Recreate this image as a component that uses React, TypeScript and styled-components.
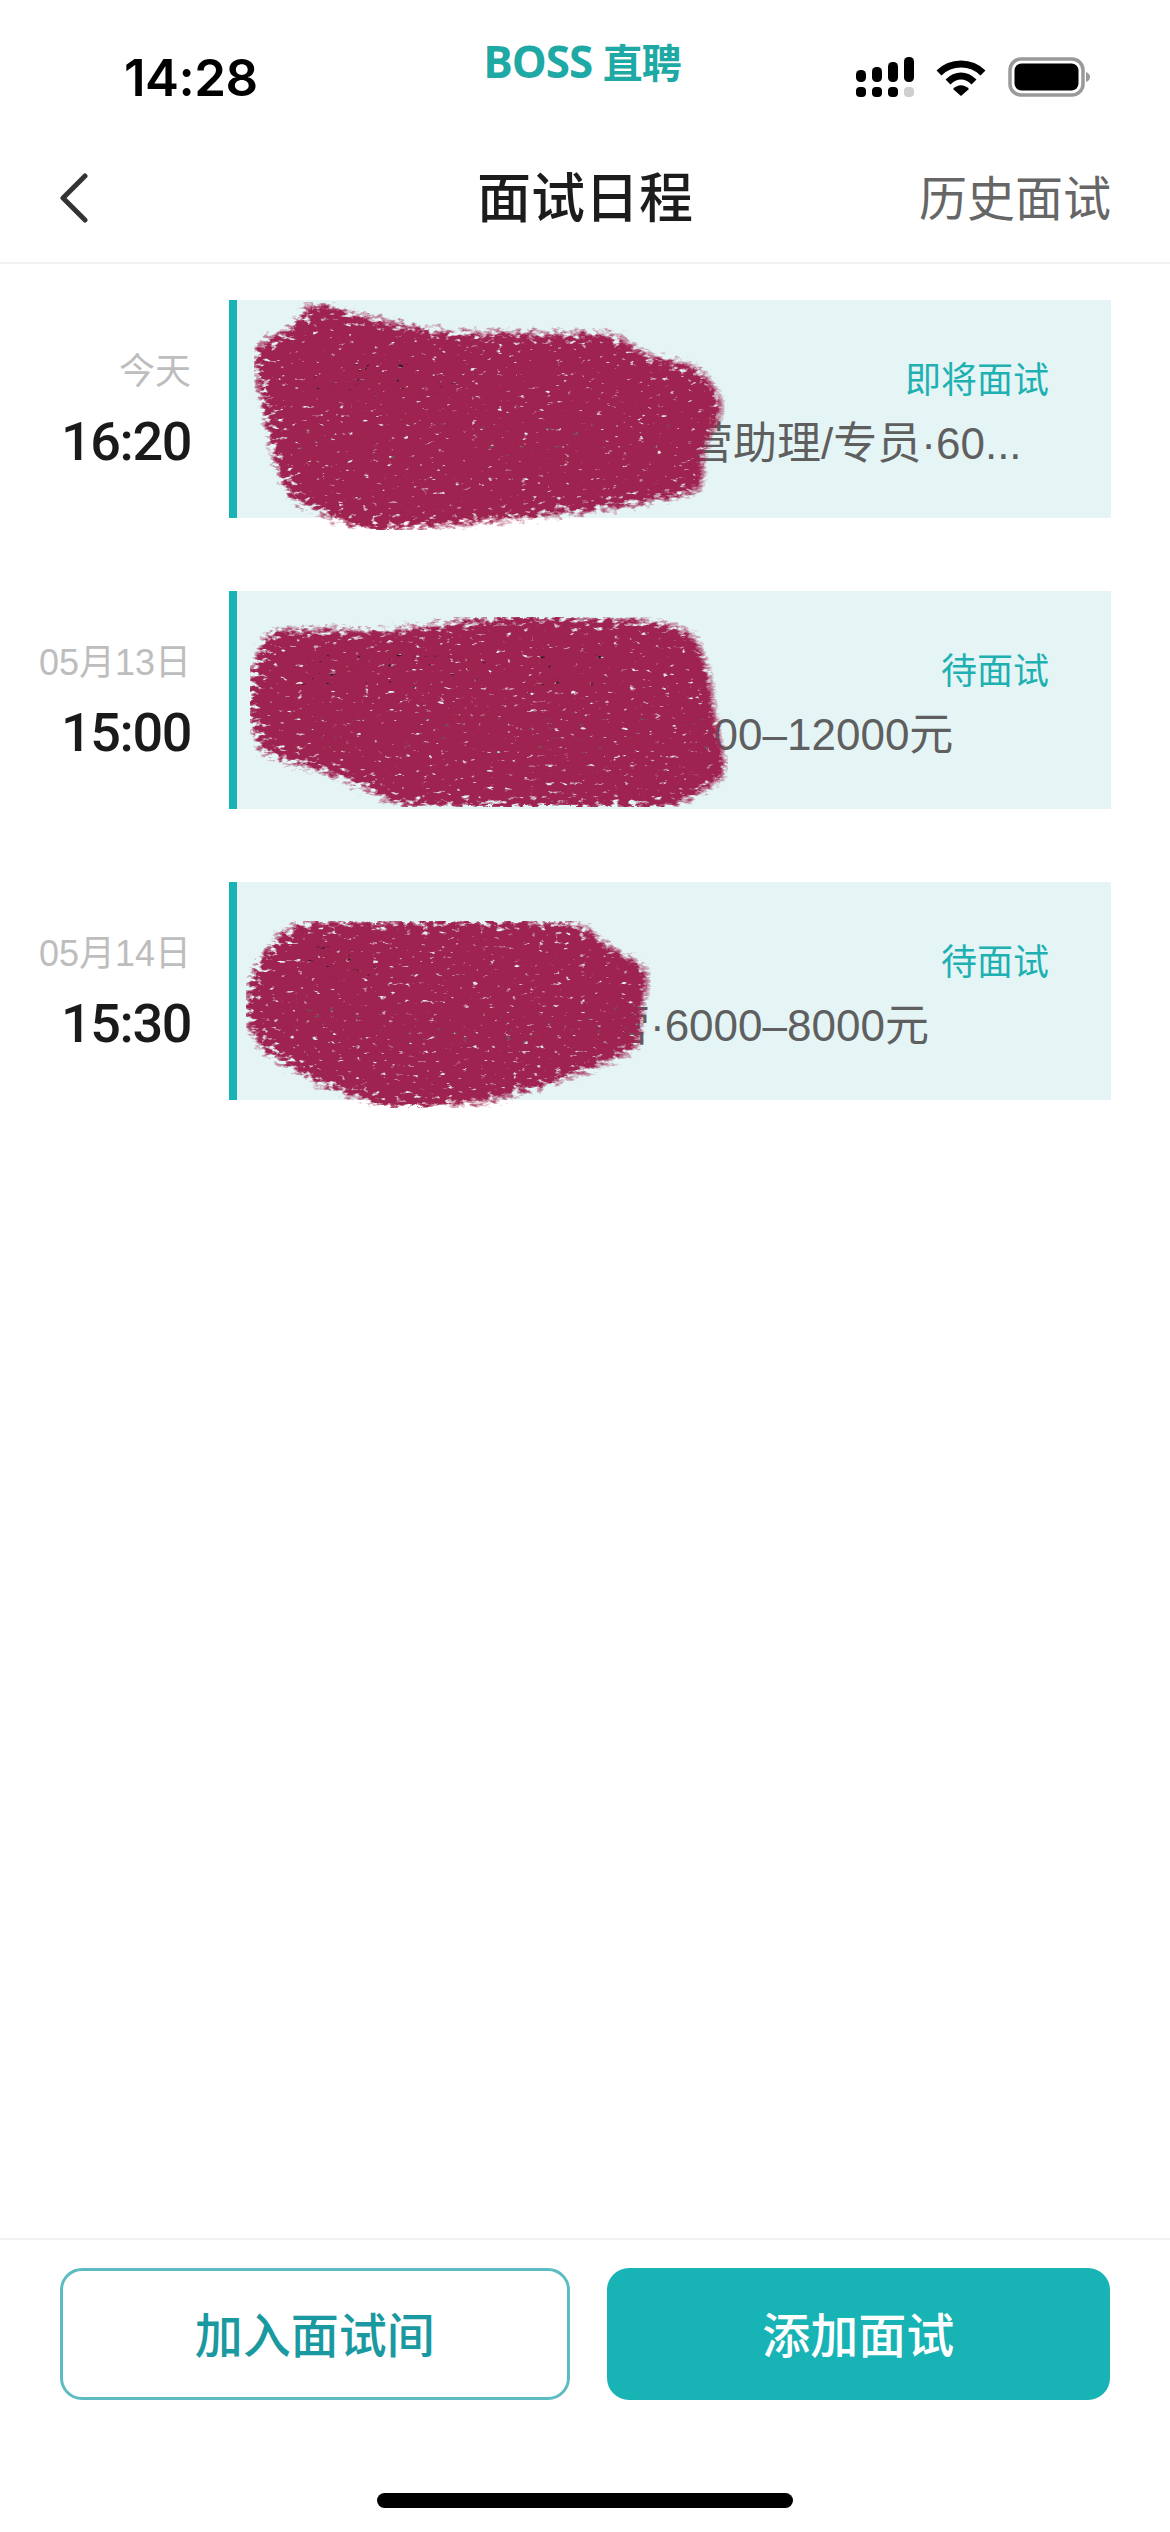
import styled, { createGlobalStyle } from "styled-components";

const TEAL = "#18b3b4";
const CJK = `"Noto Sans CJK SC", "Noto Sans", sans-serif`;
const TEXT = `"Liberation Sans", "Noto Sans CJK SC", sans-serif`;

type Interview = {
  day: string;
  time: string;
  name: string;
  detail: string;
  status: string;
  seed: number;
  blot: string;
};

const interviews: Interview[] = [
  {
    day: "今天",
    time: "16:20",
    name: "某某某某",
    detail: "某某某某某某某 - 运营助理/专员·60...",
    status: "即将面试",
    seed: 4,
    blot: "M77 2 L159 23 L219 34 L390 35 L413 55 L472 69 L496 105 L474 148 L474 191 L368 209 L234 223 L137 230 L62 198 L47 159 L32 87 L25 48 L70 26 Z",
  },
  {
    day: "05月13日",
    time: "15:00",
    name: "某某某某某·某酒",
    detail: "某某某某某某某某·7000–12000元",
    status: "待面试",
    seed: 11,
    blot: "M40 39 L159 41 L278 26 L413 30 L465 41 L480 82 L487 135 L499 185 L443 216 L293 216 L174 214 L122 189 L32 160 L21 118 L25 78 Z",
  },
  {
    day: "05月14日",
    time: "15:30",
    name: "某某",
    detail: "某某某某某某运营·6000–8000元",
    status: "待面试",
    seed: 23,
    blot: "M66 42 L221 39 L353 42 L370 59 L422 89 L413 122 L410 166 L347 192 L261 219 L163 226 L94 202 L37 169 L17 136 L25 89 L48 59 Z",
  },
];

function Blot({ path, seed }: { path: string; seed: number }) {
  const id = `blot-${seed}`;
  return (
    <BlotSvg width="560" height="250" viewBox="0 0 560 250" aria-hidden="true">
      <filter id={id} x="0" y="0" width="100%" height="100%" colorInterpolationFilters="sRGB">
        <feGaussianBlur in="SourceAlpha" stdDeviation="10" result="soft" />
        <feTurbulence type="fractalNoise" baseFrequency="0.12 0.22" numOctaves="3" seed={seed} result="noise" />
        <feDisplacementMap in="soft" in2="noise" scale="14" xChannelSelector="R" yChannelSelector="G" result="rough" />
        <feColorMatrix
          in="noise"
          type="matrix"
          values="0 0 0 0 0  0 0 0 0 0  0 0 0 0 0  2.6 0 0 0 -0.4"
          result="grain"
        />
        <feComposite in="rough" in2="grain" operator="arithmetic" k1="0.8" k2="0.3" k3="0" k4="0" result="mix" />
        <feComponentTransfer in="mix" result="cut">
          <feFuncA type="linear" slope="3" intercept="-0.85" />
        </feComponentTransfer>
        <feFlood floodColor="#9f2350" />
        <feComposite in2="cut" operator="in" />
      </filter>
      <path d={path} fill="#000" filter={`url(#${id})`} />
    </BlotSvg>
  );
}

function SignalIcon() {
  const columns = [
    { x: 0, y: 13 },
    { x: 16, y: 10 },
    { x: 32, y: 5 },
    { x: 48, y: 0 },
  ];
  return (
    <svg width="58" height="40" viewBox="0 0 58 40" aria-hidden="true">
      {columns.map((c) => (
        <rect key={c.x} x={c.x} y={c.y} width="10" height={25 - c.y} rx="4.5" fill="#000" />
      ))}
      {columns.map((c, i) => (
        <rect key={c.x} x={c.x} y="30" width="10" height="10" rx="4" fill={i === 3 ? "#cfcfcf" : "#000"} />
      ))}
    </svg>
  );
}

function WifiIcon() {
  return (
    <svg width="50" height="38" viewBox="0 0 50 38" aria-hidden="true">
      <path d="M3 15 C15 3 35 3 47 15" fill="none" stroke="#000" strokeWidth="7" strokeLinejoin="round" />
      <path d="M12 24 C20 16 30 16 38 24" fill="none" stroke="#000" strokeWidth="7" />
      <path d="M17 31 C22 26 28 26 33 31 L25 38 Z" fill="#000" />
    </svg>
  );
}

function BatteryIcon() {
  return (
    <svg width="83" height="40" viewBox="0 0 83 40" aria-hidden="true">
      <rect x="2" y="2" width="73" height="36" rx="11" fill="none" stroke="#999" strokeWidth="3.5" />
      <rect x="6.5" y="6.5" width="64" height="27" rx="7" fill="#000" />
      <path d="M78 15 C81 16 82 18 82 20 C82 22 81 24 78 25 Z" fill="#999" />
    </svg>
  );
}

export default function App() {
  return (
    <Page>
      <GlobalStyle />
      <StatusBar>
        <Clock>14:28</Clock>
        <Brand>
          BOSS <BrandCn>直聘</BrandCn>
        </Brand>
        <StatusIcons>
          <SignalIcon />
          <WifiIcon />
          <BatteryIcon />
        </StatusIcons>
      </StatusBar>

      <NavBar>
        <BackIcon width="30" height="50" viewBox="0 0 30 50" aria-hidden="true">
          <path d="M26 3 L4 25 L26 47" />
        </BackIcon>
        <Title>面试日程</Title>
        <HistoryLink>历史面试</HistoryLink>
      </NavBar>

      <List>
        {interviews.map((item) => (
          <Row key={item.time}>
            <When>
              <Day>{item.day}</Day>
              <Time>{item.time}</Time>
            </When>
            <Card>
              <CardTop>
                <Name>{item.name}</Name>
                <Status>{item.status}</Status>
              </CardTop>
              <Detail>{item.detail}</Detail>
              <Blot path={item.blot} seed={item.seed} />
            </Card>
          </Row>
        ))}
      </List>

      <Footer>
        <Buttons>
          <GhostButton>加入面试间</GhostButton>
          <SolidButton>添加面试</SolidButton>
        </Buttons>
        <HomeBar />
      </Footer>
    </Page>
  );
}

const GlobalStyle = createGlobalStyle`
  html, body {
    margin: 0;
    padding: 0;
    background: #fff;
  }
`;

const Page = styled.div`
  display: flex;
  flex-direction: column;
  width: 1170px;
  height: 2532px;
  overflow: hidden;
  font-family: ${CJK};
  background: #fff;
`;

const StatusBar = styled.div`
  display: grid;
  grid-template-columns: 1fr auto 1fr;
  height: 134px;
  padding: 0 79px 0 73px;
  box-sizing: border-box;
`;

const Clock = styled.div`
  margin: 49px 0 0 51px;
  font-family: Inter, "Liberation Sans", sans-serif;
  font-size: 51px;
  line-height: 58px;
  font-weight: 600;
  letter-spacing: -0.5px;
  color: #000;
`;

const Brand = styled.div`
  margin-top: 32px;
  font-family: "Open Sans", "Noto Sans", sans-serif;
  font-size: 44px;
  line-height: 58px;
  font-weight: 700;
  letter-spacing: -1px;
  color: #1fa9a5;
`;

const BrandCn = styled.span`
  font-family: ${CJK};
  font-size: 40px;
`;

const StatusIcons = styled.div`
  display: flex;
  justify-content: flex-end;
  align-items: center;
  gap: 22px;
  height: 40px;
  margin-top: 57px;
`;

const NavBar = styled.div`
  display: grid;
  grid-template-columns: 1fr auto 1fr;
  align-items: center;
  height: 130px;
  padding: 0 59px;
  box-sizing: border-box;
  border-bottom: 2px solid #f1f1f1;
`;

const BackIcon = styled.svg`
  fill: none;
  stroke: #333;
  stroke-width: 5;
  stroke-linecap: round;
  stroke-linejoin: round;
`;

const Title = styled.div`
  margin-bottom: 6px;
  font-size: 54px;
  line-height: 64px;
  font-weight: 500;
  color: #1c1c1c;
`;

const HistoryLink = styled.div`
  justify-self: end;
  margin-bottom: 6px;
  font-size: 48px;
  line-height: 64px;
  color: #666;
`;

const List = styled.div`
  flex: 1;
  display: flex;
  flex-direction: column;
  gap: 73px;
  padding: 36px 59px 0 0;
`;

const Row = styled.div`
  display: flex;
  gap: 38px;
  height: 218px;
`;

const When = styled.div`
  display: flex;
  flex-direction: column;
  align-items: flex-end;
  width: 191px;
  flex-shrink: 0;
`;

const Day = styled.div`
  margin-top: 49px;
  font-family: ${TEXT};
  font-size: 36px;
  line-height: 46px;
  color: #bdbdbd;
`;

const Time = styled.div`
  margin-top: 15px;
  font-family: Roboto, "Liberation Sans", sans-serif;
  font-size: 54px;
  line-height: 64px;
  font-weight: 500;
  letter-spacing: -1.4px;
  color: #1a1a1a;
`;

const Card = styled.div`
  position: relative;
  flex: 1;
  min-width: 0;
  padding: 0 62px 0 61px;
  border-left: 8px solid ${TEAL};
  background: #e5f5f6;
`;

const CardTop = styled.div`
  display: flex;
  justify-content: space-between;
  align-items: center;
  padding-top: 51px;
`;

const Name = styled.div`
  font-size: 40px;
  line-height: 52px;
  font-weight: 500;
  color: #1a1a1a;
`;

const Status = styled.div`
  font-size: 36px;
  line-height: 52px;
  color: #1fb0b2;
`;

const Detail = styled.div`
  margin-top: 15px;
  white-space: nowrap;
  font-family: ${TEXT};
  font-size: 44px;
  line-height: 52px;
  color: #5f5f5f;
`;

const BlotSvg = styled.svg`
  position: absolute;
  left: -8px;
  top: 0;
  overflow: visible;
  pointer-events: none;
`;

const Footer = styled.div`
  display: flex;
  flex-direction: column;
  height: 294px;
  box-sizing: border-box;
  padding: 28px 60px 0;
  border-top: 2px solid #f1f1f1;
`;

const Buttons = styled.div`
  display: flex;
  gap: 37px;
`;

const GhostButton = styled.button`
  flex: 1;
  height: 132px;
  padding: 0 0 5px;
  border: 3px solid #5cbcc1;
  border-radius: 22px;
  background: #fff;
  font-family: ${CJK};
  font-size: 48px;
  font-weight: 500;
  color: #1a9aa0;
`;

const SolidButton = styled.button`
  flex: 1;
  height: 132px;
  padding: 0 0 5px;
  border: 0;
  border-radius: 22px;
  background: ${TEAL};
  font-family: ${CJK};
  font-size: 48px;
  font-weight: 500;
  color: #fff;
`;

const HomeBar = styled.div`
  align-self: center;
  width: 416px;
  height: 15px;
  margin-top: 93px;
  border-radius: 8px;
  background: #000;
`;
